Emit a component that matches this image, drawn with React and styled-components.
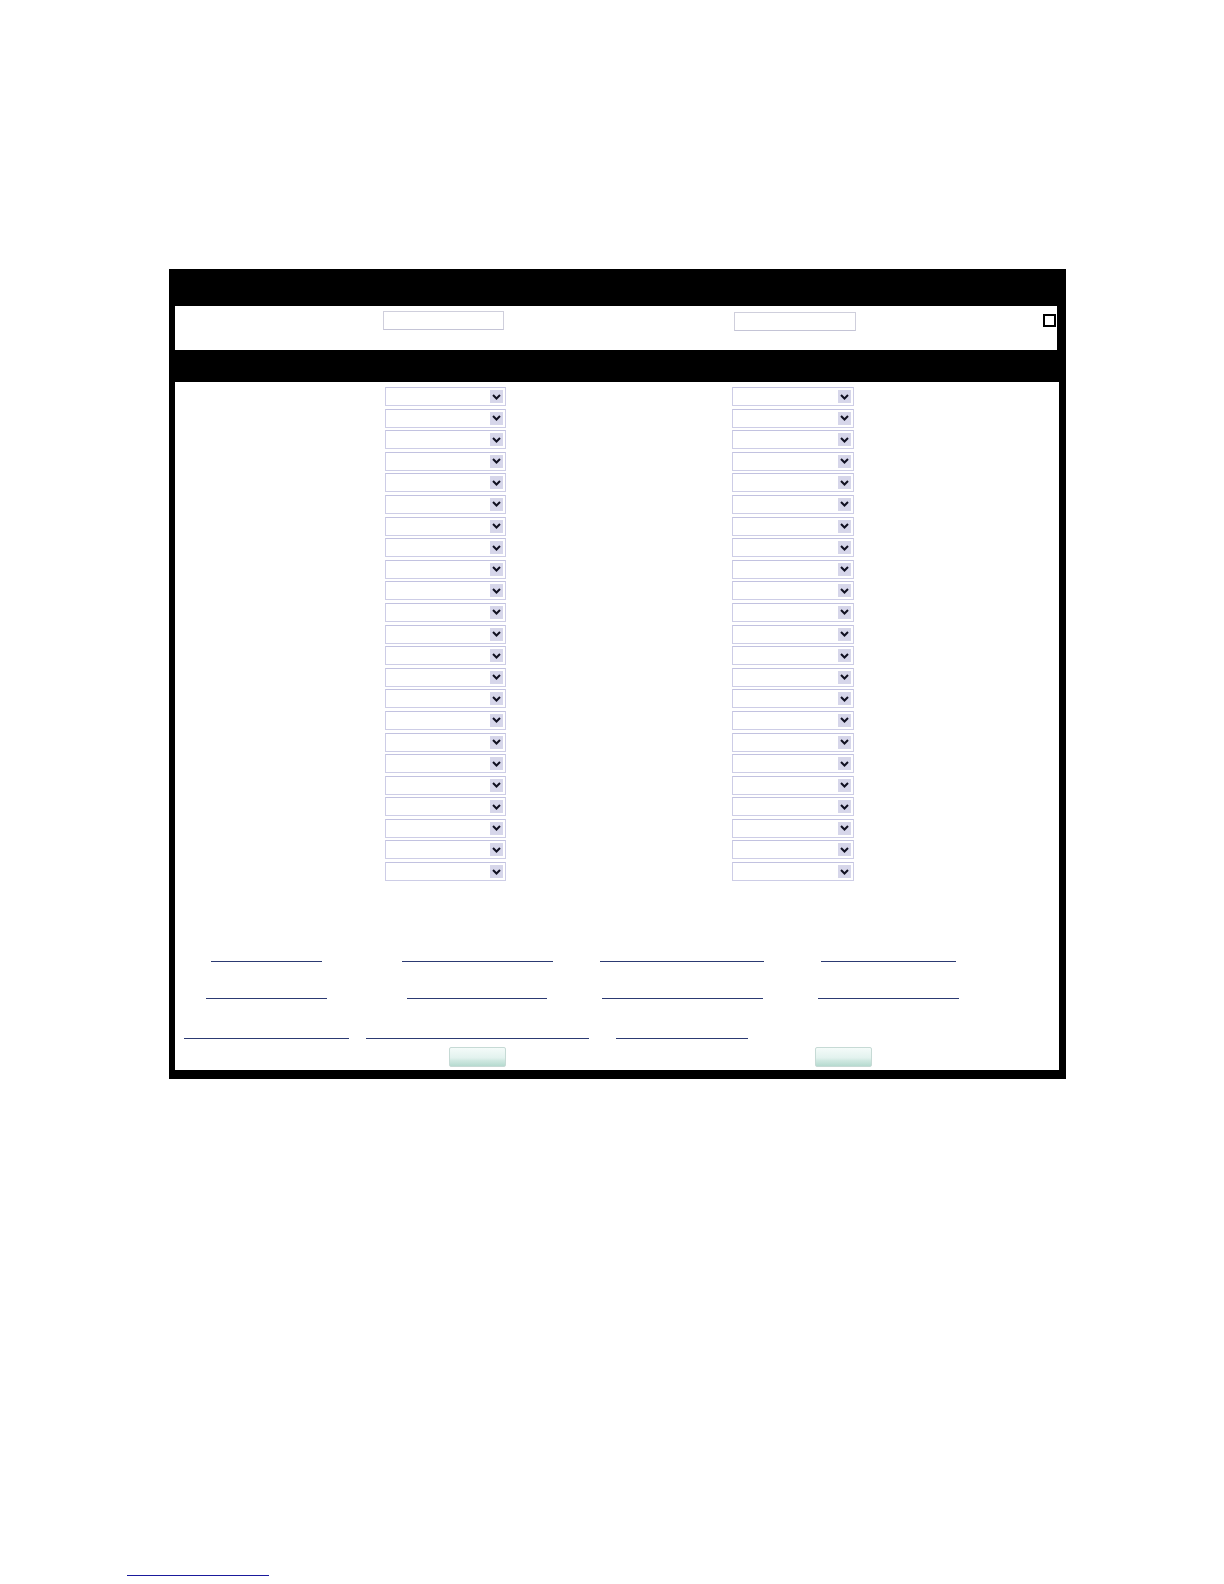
import React from 'react'
import styled, { createGlobalStyle } from 'styled-components'

const GlobalStyle = createGlobalStyle`
    html, body {
        margin: 0;
        padding: 0;
        background: #ffffff;
        font-family: 'Liberation Sans', Arial, sans-serif;
    }
`

const Page = styled.div`
    width: 1224px;
    min-height: 1584px;
    display: flex;
    flex-direction: column;
`

const Frame = styled.form`
    margin: 269px 0 0 169px;
    width: 884px;
    background: #000000;
    padding: 0 7px 9px 6px;
    display: flex;
    flex-direction: column;
`

const BlackBar = styled.div`
    height: ${props => props.h}px;
`

const InputRow = styled.div`
    height: 44px;
    margin-right: 2px;
    background: #ffffff;
    display: grid;
    grid-template-columns: 208px 121px 230px 122px 187px 13px;
    align-items: start;
`

const TextField = styled.input`
    box-sizing: border-box;
    width: 100%;
    height: 19px;
    margin-top: ${props => props.top}px;
    border: 1.5px solid #cfcfdc;
    border-bottom-color: #c4c4d6;
    background: #ffffff;
    padding: 0 3px;
    font-size: 12px;
    outline: none;
`

const CheckBox = styled.span`
    box-sizing: border-box;
    display: block;
    width: 13px;
    height: 13px;
    margin-top: 8px;
    border: 2px solid #000000;
    background: #ffffff;
`

const Body = styled.div`
    background: #ffffff;
    padding: 5px 0 3px;
    display: flex;
    flex-direction: column;
`

const SelectGrid = styled.div`
    display: grid;
    grid-template-columns: 210px 121px 226px 122px;
    grid-auto-rows: 19px;
    row-gap: 2.6px;
`

const SelectBox = styled.div`
    box-sizing: border-box;
    grid-column: ${props => props.col};
    height: 19px;
    border: 1.5px solid #cdcde6;
    border-top-color: #c2c2e0;
    background: #ffffff;
    display: flex;
    align-items: center;
    padding-right: 2px;
`

const NativeSelect = styled.select`
    flex: 1;
    min-width: 0;
    height: 100%;
    appearance: none;
    border: none;
    background: transparent;
    font-size: 11px;
    outline: none;
`

const ArrowBox = styled.span`
    width: 13px;
    height: 13px;
    background: #d6d6ea;
    display: flex;
    align-items: center;
    justify-content: center;
`

const LinkGrid = styled.div`
    display: grid;
    grid-template-columns: 182px 240px 170px 242px;
    justify-items: center;
    align-items: end;
    height: 20px;
    margin-top: ${props => props.gap}px;
`

const FormLink = styled.a`
    display: block;
    box-sizing: border-box;
    width: ${props => props.w}px;
    height: 20px;
    border-bottom: 1.5px solid #2c3a72;
    text-decoration: none;
    transform: translateX(${props => props.shift || 0}px);
`

const ButtonRow = styled.div`
    margin-top: 8px;
    padding-left: 274px;
    display: flex;
    gap: 309px;
`

const GreenButton = styled.button`
    box-sizing: border-box;
    width: 57px;
    height: 20px;
    padding: 0;
    border: 1px solid #c6dad5;
    border-radius: 2px;
    background: linear-gradient(#f4fbf9 0%, #e2f2ee 55%, #cfe8e1 70%, #b6dbd0 100%);
`

const FooterLink = styled.a`
    display: block;
    width: 142px;
    height: 18px;
    margin: 478px 0 0 127px;
    border-bottom: 1.5px solid #1a1a9c;
`

const Chevron = () => (
    <svg width="9" height="6" viewBox="0 0 9 6">
        <path d="M1 1 L4.5 4.5 L8 1" fill="none" stroke="#111122" strokeWidth="2" />
    </svg>
)

const Select = ({ col }) => (
    <SelectBox col={col}>
        <NativeSelect defaultValue="">
            <option value=""></option>
        </NativeSelect>
        <ArrowBox><Chevron /></ArrowBox>
    </SelectBox>
)

const rows = Array.from({ length: 23 }, (_, i) => i)

const linkRows = [
    { gap: 61, links: [111, 151, 164, 135] },
    { gap: 17, links: [121, 140, 161, 141] },
    { gap: 20, links: [165, 223, 132] },
]

const App = () => {
    return (
        <Page>
            <GlobalStyle />
            <Frame onSubmit={e => e.preventDefault()}>
                <BlackBar h={37} />
                <InputRow>
                    <span />
                    <TextField type="text" top={5} />
                    <span />
                    <TextField type="text" top={6} />
                    <span />
                    <CheckBox />
                </InputRow>
                <BlackBar h={32} />
                <Body>
                    <SelectGrid>
                        {rows.map(i => (
                            <React.Fragment key={i}>
                                <Select col={2} />
                                <Select col={4} />
                            </React.Fragment>
                        ))}
                    </SelectGrid>
                    {linkRows.map((row, r) => (
                        <LinkGrid key={r} gap={row.gap}>
                            {row.links.map((w, i) => (
                                <FormLink key={i} href="#" w={w} />
                            ))}
                        </LinkGrid>
                    ))}
                    <ButtonRow>
                        <GreenButton type="button" />
                        <GreenButton type="button" />
                    </ButtonRow>
                </Body>
            </Frame>
            <FooterLink href="#" />
        </Page>
    )
}

export default App
